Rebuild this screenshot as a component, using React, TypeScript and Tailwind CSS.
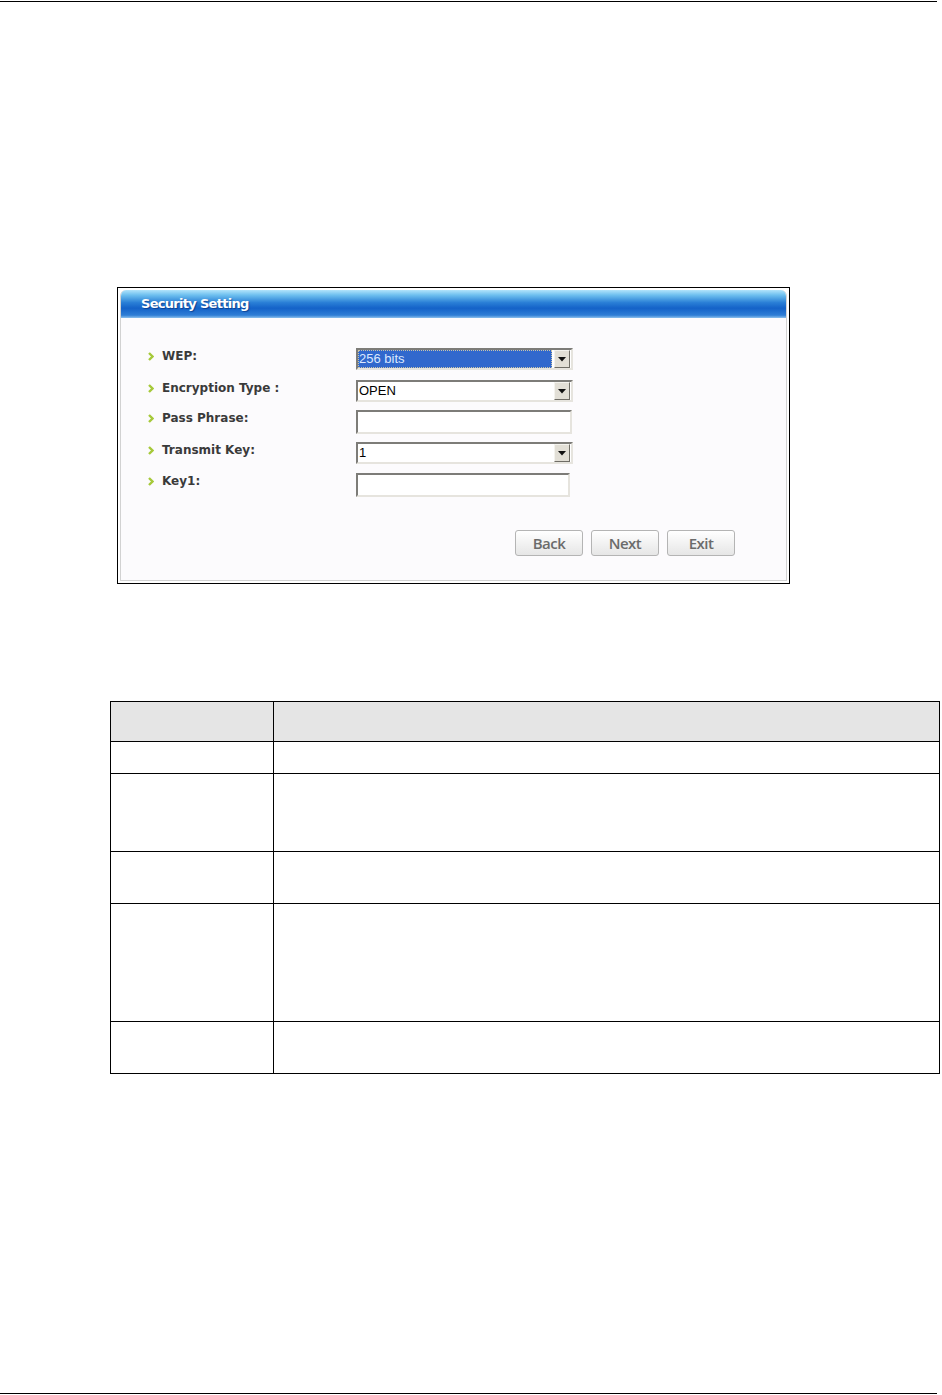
import React from 'react';

type Field = {
  label: string;
  kind: 'select' | 'text';
  value?: string;
  selected?: boolean;
  row: string;
  width: string;
};

const fields: Field[] = [
  { label: 'WEP:', kind: 'select', value: '256 bits', selected: true, row: 'h-[32px]', width: 'w-[217px]' },
  { label: 'Encryption Type :', kind: 'select', value: 'OPEN', row: 'h-[30px]', width: 'w-[217px]' },
  { label: 'Pass Phrase:', kind: 'text', row: 'h-[32px]', width: 'w-[216px]' },
  { label: 'Transmit Key:', kind: 'select', value: '1', row: 'h-[31px]', width: 'w-[217px]' },
  { label: 'Key1:', kind: 'text', row: 'h-[31px]', width: 'w-[214px]' },
];

const tableRows = ['h-[32px]', 'h-[78px]', 'h-[52px]', 'h-[118px]', 'h-[52px]'];

function Bullet() {
  return (
    <svg width="6" height="9" viewBox="0 0 6 9" className="shrink-0">
      <polyline points="1,1 4.5,4.5 1,8" fill="none" stroke="#a6c93a" strokeWidth="2.4" />
    </svg>
  );
}

function DropButton() {
  return (
    <div className="flex h-[18px] w-[16px] shrink-0 items-center justify-center border border-t-[#f4f3ee] border-l-[#f4f3ee] border-r-[#6f6d66] border-b-[#6f6d66] bg-[#e2dfd6]">
      <svg width="8" height="5" viewBox="0 0 8 5">
        <polygon points="0,0 8,0 4,4.5" fill="#111" />
      </svg>
    </div>
  );
}

function Input({ f }: { f: Field }) {
  const box = `flex items-center ${f.width} border-2 border-t-[#7d7c78] border-l-[#7d7c78] border-r-[#e6e4de] border-b-[#e6e4de] bg-white`;
  if (f.kind === 'text') {
    return <div className={`${box} h-[24px]`} />;
  }
  return (
    <div className={`${box} h-[22px] gap-[2px] pr-px`}>
      {f.selected ? (
        <div className="flex h-full flex-1 items-center border border-dotted border-[#c9c4a8] bg-[#3168cd] text-[13px] text-[#dbe8ff]">
          {f.value}
        </div>
      ) : (
        <div className="flex h-full flex-1 items-center pl-[1px] text-[13px] text-black">{f.value}</div>
      )}
      <DropButton />
    </div>
  );
}

function Btn({ children }: { children: React.ReactNode }) {
  return (
    <button className="flex h-[26px] w-[68px] items-center justify-center rounded-[3px] border border-[#b4b4b4] bg-gradient-to-b from-white to-[#e6e6e6] text-[15px] font-semibold tracking-[-0.5px] text-[#6b6b6b] [font-family:'Open_Sans',sans-serif]">
      {children}
    </button>
  );
}

export default function App() {
  return (
    <div className="flex h-[1395px] w-[942px] flex-col bg-white [font-family:'Liberation_Sans',Arial,sans-serif]">
      <div className="mt-px h-px w-[937px] bg-black" />

      {/* dialog screenshot */}
      <div className="ml-[117px] mt-[285px] h-[297px] w-[673px] border border-black bg-white p-[2px]">
        <div className="flex h-full flex-col overflow-hidden rounded-t-[6px] border border-t-0 border-[#d2d2d2] bg-[#fcfbfd]">
          <div className="flex h-[28px] items-center bg-[linear-gradient(to_bottom,#b2e4fb_0%,#6ec0ef_18%,#2a7fd6_45%,#1462c8_65%,#2f7ed6_90%,#8cc0ec_100%)] pl-[20px] text-[13px] font-bold text-white [font-family:'DejaVu_Sans',sans-serif] tracking-[-0.7px] [text-shadow:1px_1px_1px_rgba(0,40,110,0.6)]">
            Security Setting
          </div>

          <div className="flex flex-col pt-[30px]">
            {fields.map((f) => (
              <div key={f.label} className={`flex ${f.row}`}>
                <div className="flex w-[235px] shrink-0 items-center gap-[8px] self-start pl-[27px] pt-[1px] text-[12px] font-bold leading-[14px] text-[#3a3a3a] [font-family:'DejaVu_Sans',sans-serif]">
                  <Bullet />
                  {f.label}
                </div>
                <Input f={f} />
              </div>
            ))}
          </div>

          <div className="mt-[26px] flex justify-end gap-[8px] pr-[51px]">
            <Btn>Back</Btn>
            <Btn>Next</Btn>
            <Btn>Exit</Btn>
          </div>
        </div>
      </div>

      {/* description table */}
      <table className="ml-[110px] mt-[117px] w-[830px] border-collapse">
        <tbody>
          <tr className="h-[40px] bg-[#e5e5e5]">
            <td className="w-[163px] border border-black" />
            <td className="border border-black" />
          </tr>
          {tableRows.map((h, i) => (
            <tr key={i} className={h}>
              <td className="border border-black" />
              <td className="border border-black" />
            </tr>
          ))}
        </tbody>
      </table>

      <div className="mb-px mt-auto h-px w-[937px] bg-black" />
    </div>
  );
}
